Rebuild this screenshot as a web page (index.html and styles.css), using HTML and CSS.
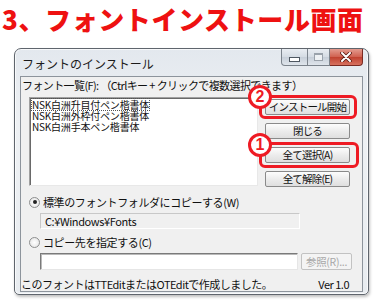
FILE: index.html
```html
<!DOCTYPE html>
<html>
  <head>
    <meta charset="utf-8">
    <title>フォントインストール画面</title>
    <link rel="stylesheet" href="styles.css">
  </head>
  <body>
    <h1 class="heading">3、フォントインストール画面</h1>

    <div class="window">
      <div class="titlebar">
        <span class="title">フォントのインストール</span>
        <div class="caption">
          <span class="cap cap-min"><i></i></span>
          <span class="cap cap-max"><i></i></span>
          <span class="cap cap-close">
            <svg width="12" height="10" viewBox="0 0 12 10">
              <path d="M2 1 L10 9 M10 1 L2 9" stroke="#5a1a12" stroke-width="3.6" stroke-linecap="round"/>
              <path d="M2 1 L10 9 M10 1 L2 9" stroke="#fff" stroke-width="2" stroke-linecap="round"/>
            </svg>
          </span>
        </div>
      </div>

      <div class="client">
        <div class="label">フォント一覧(F): （Ctrlキー + クリックで複数選択できます）</div>

        <div class="main">
          <ul class="fontlist">
            <li class="focused">NSK白洲升目付ペン楷書体</li>
            <li>NSK白洲外枠付ペン楷書体</li>
            <li>NSK白洲手本ペン楷書体</li>
          </ul>
          <div class="buttons">
            <button class="btn">インストール開始</button>
            <button class="btn">閉じる</button>
            <button class="btn">全て選択(A)</button>
            <button class="btn">全て解除(E)</button>
          </div>
        </div>

        <div class="radio-row"><span class="radio checked"></span>標準のフォントフォルダにコピーする(W)</div>
        <div class="field readonly">C:¥Windows¥Fonts</div>

        <div class="radio-row second"><span class="radio"></span>コピー先を指定する(C)</div>
        <div class="path-row">
          <div class="field"></div>
          <button class="btn browse" disabled>参照(R)...</button>
        </div>

        <div class="status">
          <span>このフォントはTTEditまたはOTEditで作成しました。</span>
          <span>Ver 1.0</span>
        </div>

        <span class="mark mark-install"></span>
        <span class="mark mark-select"></span>
        <span class="num num-2">2</span>
        <span class="num num-1">1</span>
      </div>
    </div>
  </body>
</html>
```

FILE: styles.css
```css
body {
  margin: 0;
  width: 375px;
  height: 300px;
  background: #fff;
  overflow: hidden;
  font-family: "Noto Sans CJK JP", "Liberation Sans", sans-serif;
}

.heading {
  margin: 0;
  height: 48px;
  padding-left: 2px;
  font-size: 26px;
  line-height: 38px;
  font-weight: 900;
  color: #ee1111;
  letter-spacing: 0.6px;
}

.window {
  width: 355px;
  height: 247px;
  margin-left: 14px;
  box-sizing: border-box;
  border: 1px solid #5f656d;
  border-radius: 7px 7px 5px 5px;
  background: linear-gradient(180deg, #e3e8ee 0%, #eef1f4 30%, #e8ecf0 100%);
  box-shadow: 1px 2px 3px rgba(0, 0, 0, 0.25), inset 0 0 0 1px rgba(255, 255, 255, 0.7);
  display: flex;
  flex-direction: column;
}

.titlebar {
  height: 27px;
  display: flex;
  align-items: center;
  padding-left: 7px;
  flex-shrink: 0;
}

.title {
  font-size: 12px;
  color: #1b1b1b;
  margin-top: 1px;
}

.caption {
  margin-left: auto;
  margin-right: 5px;
  align-self: flex-start;
  display: flex;
}

.cap {
  height: 17px;
  box-sizing: border-box;
  border: 1px solid #7b838c;
  border-top: none;
  display: flex;
  align-items: center;
  justify-content: center;
  background: linear-gradient(180deg, #e9edf2 0%, #d4dbe3 50%, #c6ced8 51%, #dfe5ec 100%);
}

.cap-min {
  width: 27px;
  border-radius: 0 0 0 4px;
}

.cap-min i {
  width: 9px;
  height: 3px;
  margin-top: 5px;
  border: 1px solid #4f5862;
  background: #fff;
}

.cap-max {
  width: 22px;
  border-left: none;
}

.cap-max i {
  width: 7px;
  height: 5px;
  border: 1px solid #9aa2ab;
  border-top-width: 2px;
  background: #eef1f4;
}

.cap-close {
  width: 33px;
  border-left: none;
  border-color: #7a2a22;
  border-radius: 0 0 4px 0;
  background: linear-gradient(180deg, #e39b8f 0%, #d0604f 50%, #c0412f 51%, #d6715f 100%);
}

.client {
  position: relative;
  flex: 1;
  margin: 0 5px 5px 5px;
  background: #f0f0f0;
  border: 1px solid #8d949c;
  font-size: 11px;
  color: #111;
  display: flex;
  flex-direction: column;
}

.label {
  padding: 1px 0 0 1px;
  line-height: 14px;
  letter-spacing: -0.6px;
  white-space: nowrap;
}

.main {
  display: flex;
  margin: 5px 0 0 8px;
}

.fontlist {
  list-style: none;
  margin: 0;
  padding: 1px 2px 0;
  width: 229px;
  height: 89px;
  box-sizing: border-box;
  background: #fff;
  border: 1px solid;
  border-color: #a0a0a0 #e8e8e8 #e8e8e8 #a0a0a0;
  box-shadow: inset 1px 1px 0 #696969;
}

.fontlist li {
  font-size: 10px;
  line-height: 11px;
  letter-spacing: -0.2px;
  white-space: nowrap;
}

.fontlist li.focused {
  outline: 1px dotted #555;
  outline-offset: 0;
  width: max-content;
}

.buttons {
  display: flex;
  flex-direction: column;
  gap: 8px;
  margin: 2px 0 0 7px;
}

.btn {
  width: 85px;
  height: 16px;
  padding: 0;
  font-family: inherit;
  font-size: 10.5px;
  line-height: 14px;
  color: #111;
  white-space: nowrap;
  border: 1px solid #8a8a8a;
  border-radius: 2px;
  background: linear-gradient(180deg, #fdfdfd 0%, #ececec 50%, #dfdfdf 100%);
  letter-spacing: -0.8px;
}

.radio-row {
  display: flex;
  align-items: center;
  margin: 8px 0 0 8px;
  line-height: 14px;
  letter-spacing: -0.4px;
}

.radio-row.second {
  margin-top: 6px;
}

.radio {
  width: 11px;
  height: 11px;
  box-sizing: border-box;
  margin-right: 3px;
  border: 1px solid #8e8f8f;
  border-radius: 50%;
  background: radial-gradient(circle, #fff 0%, #eaeaea 70%, #d8d8d8 100%);
  display: flex;
  align-items: center;
  justify-content: center;
}

.radio.checked::after {
  content: "";
  width: 4px;
  height: 4px;
  border-radius: 50%;
  background: #222;
}

.field {
  height: 16px;
  box-sizing: border-box;
  background: #fff;
  border: 1px solid;
  border-color: #7a7a7a #e6e6e6 #e6e6e6 #7a7a7a;
  box-shadow: inset 1px 1px 0 #b9b9b9;
}

.field.readonly {
  width: 260px;
  margin: 4px 0 0 19px;
  background: #f0f0f0;
  border-color: #c8c8c8 #ffffff #ffffff #c8c8c8;
  box-shadow: none;
  padding-left: 4px;
  line-height: 14px;
  letter-spacing: -0.4px;
}

.path-row {
  display: flex;
  gap: 3px;
  margin: 4px 0 0 19px;
}

.path-row .field {
  width: 258px;
  height: 17px;
}

.btn.browse {
  width: 51px;
  height: 17px;
  color: #a8a8a8;
  border-color: #c2c2c2;
  background: #f4f4f4;
  letter-spacing: -0.3px;
}

.status {
  display: flex;
  justify-content: space-between;
  margin-top: 7px;
  padding-right: 13px;
  line-height: 14px;
  letter-spacing: -0.5px;
  white-space: nowrap;
}

.mark {
  position: absolute;
  border: 3px solid #ee1b24;
  border-radius: 6px;
  box-sizing: border-box;
}

.mark-install {
  left: 238px;
  top: 18px;
  width: 98px;
  height: 24px;
}

.mark-select {
  left: 238px;
  top: 65px;
  width: 100px;
  height: 26px;
}

.num {
  position: absolute;
  width: 24px;
  height: 24px;
  box-sizing: border-box;
  border: 3px solid #ee1b24;
  border-radius: 50%;
  background: #fff;
  color: #ee1b24;
  font-family: "Liberation Sans", sans-serif;
  font-weight: 700;
  font-size: 16px;
  line-height: 18px;
  text-align: center;
}

.num-2 {
  left: 227px;
  top: 8px;
}

.num-1 {
  left: 227px;
  top: 56px;
}
```
